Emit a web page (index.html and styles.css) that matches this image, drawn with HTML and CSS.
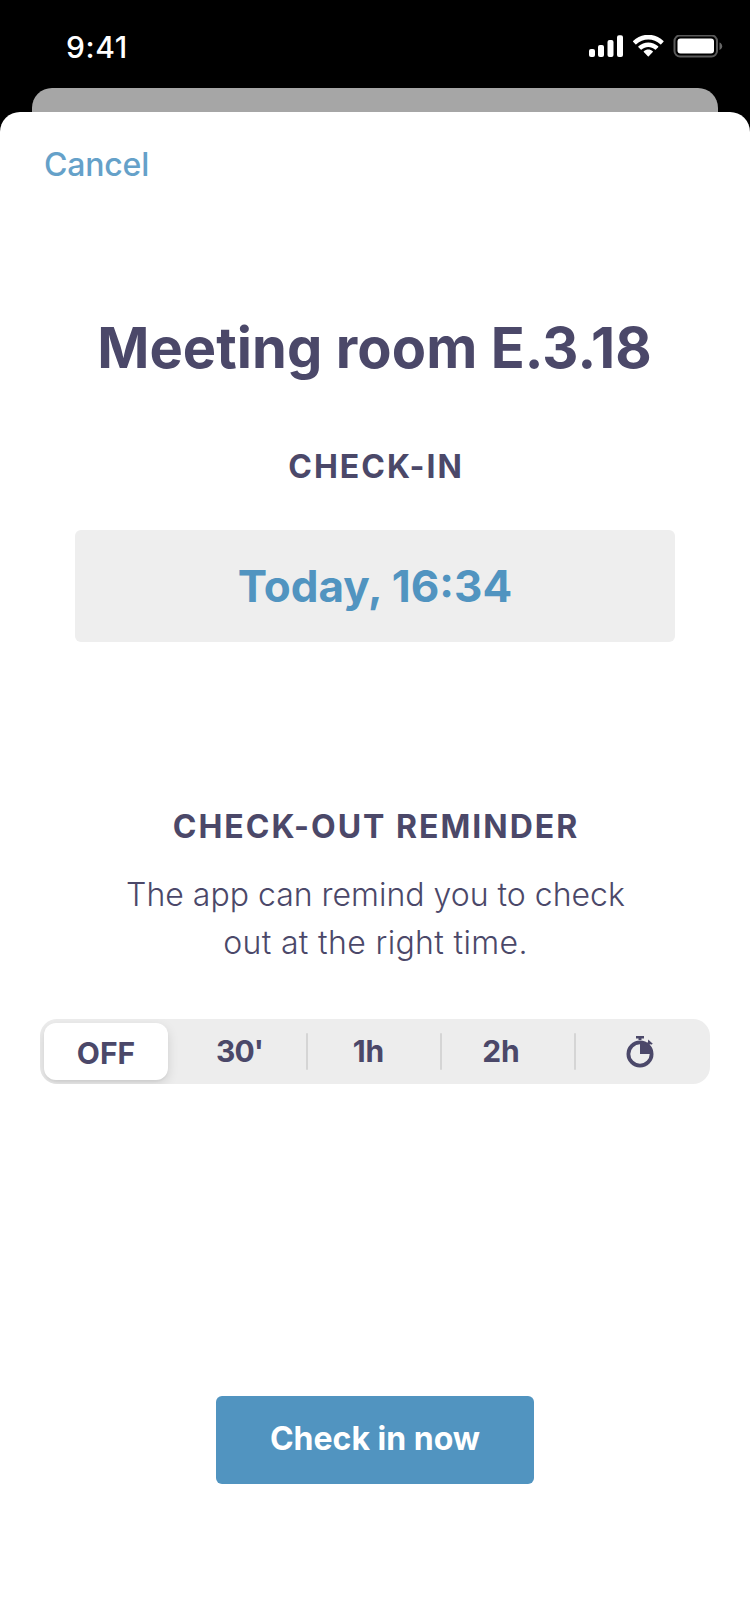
FILE: index.html
```html
<!DOCTYPE html>
<html lang="en">
<head>
<meta charset="utf-8">
<title>Check in</title>
<link rel="stylesheet" href="styles.css">
</head>
<body>
<div class="screen">
  <header class="status">
    <span class="time">9:41</span>
    <svg class="signals" width="136" height="24" viewBox="0 0 136 24">
      <g fill="#fff">
        <rect x="1" y="14" width="6" height="8" rx="2"/>
        <rect x="10" y="10" width="6" height="12" rx="2"/>
        <rect x="19.5" y="5" width="6" height="17" rx="2"/>
        <rect x="29" y="0.3" width="6" height="21.7" rx="2"/>
        <path d="M60.3 4.4c4.5 0 8.800 1.700 12 4.800.25.25.63.25.87 0l2.330-2.400c.25-.25.25-.65 0-.9-8.500-8.200-21.900-8.200-30.400 0-.25.25-.25.650 0 .9l2.330 2.400c.24.25.62.25.870 0 3.200-3.100 7.500-4.800 12-4.800z"/>
        <path d="M60.300 12c2.460 0 4.840.930 6.670 2.600.25.24.64.24.88 0l2.330-2.400c.25-.25.24-.66 0-.91-5.570-5.200-14.190-5.200-19.760 0-.24.25-.25.66 0 .91l2.330 2.400c.24.24.63.24.88 0 1.830-1.670 4.210-2.600 6.670-2.600z"/>
        <path d="M64.800 17.100c.25-.25.24-.66-.02-.89-2.590-2.210-6.370-2.210-8.960 0-.26.23-.27.640-.02.890l4.030 4.100c.25.25.69.25.94 0z"/>
        <rect x="89.500" y="3.500" width="36.500" height="15" rx="3"/>
      </g>
      <rect x="86.500" y="0.500" width="42.500" height="21" rx="5.500" fill="none" stroke="#5a5a5a" stroke-width="2"/>
      <path d="M131.500 7.500c1.600.6 2.700 2 2.700 3.700s-1.100 3.100-2.700 3.700z" fill="#666"/>
    </svg>
  </header>
  <div class="backdrop"></div>
  <main class="sheet">
    <a class="cancel">Cancel</a>
    <h1 class="title">Meeting room E.3.18</h1>
    <h2 class="label">CHECK-IN</h2>
    <div class="when">Today, 16:34</div>
    <h2 class="label label-out">CHECK-OUT REMINDER</h2>
    <p class="hint">The app can remind you to check<br><span class="hint-end">out at the right time.</span></p>
    <div class="segments">
      <div class="seg seg-on">OFF</div>
      <div class="seg seg-30">30'</div>
      <div class="divider"></div>
      <div class="seg seg-1h">1h</div>
      <div class="divider"></div>
      <div class="seg seg-2h">2h</div>
      <div class="divider"></div>
      <div class="seg seg-timer">
        <svg width="28" height="34" viewBox="0 0 28 34">
          <circle cx="14" cy="19" r="11.600" fill="none" stroke="#4b4869" stroke-width="3.800"/>
          <path d="M14 19V7.500A11.500 11.500 0 0 1 25.500 19zM10 1h8v2.500h-2.500V5h-3V3.500H10z" fill="#4b4869"/>
          <path d="M22.200 4.600l4.600 4.100-1.700 1-1 -.6-1.800 1.800-2.200-2 1.900-1.900z" fill="#4b4869"/>
        </svg>
      </div>
    </div>
    <button class="submit">Check in now</button>
  </main>
</div>
</body>
</html>
```
FILE: styles.css
```css
* { box-sizing: border-box; }
body {
  margin: 0;
  background: #000;
  font-family: Inter, "Liberation Sans", sans-serif;
  color: #4b4869;
}
.screen {
  display: flex;
  flex-direction: column;
  width: 750px;
  height: 1624px;
  overflow: hidden;
}
.status {
  display: flex;
  justify-content: space-between;
  height: 88px;
  padding: 35px 26px 0 66px;
}
.time {
  font-size: 30px;
  font-weight: 500;
  line-height: 24px;
  letter-spacing: 0.6px;
  color: #fff;
}
.backdrop {
  height: 24px;
  margin: 0 32px;
  border-radius: 20px 20px 0 0;
  background: #a6a6a6;
}
.sheet {
  flex: 1;
  display: flex;
  flex-direction: column;
  align-items: center;
  padding-top: 33px;
  border-radius: 20px 20px 0 0;
  background: #fff;
}
.cancel {
  align-self: flex-start;
  margin-left: 44px;
  font-size: 32px;
  font-weight: 450;
  line-height: 40px;
  letter-spacing: -0.2px;
  color: #65a1c9;
}
.title {
  margin: 129px 0 65px;
  padding-right: 1px;
  font-size: 56px;
  font-weight: 700;
  line-height: 68px;
  letter-spacing: 0.08px;
}
.label {
  margin: 0;
  padding-left: 2px;
  font-size: 32px;
  font-weight: 700;
  line-height: 40px;
  letter-spacing: 2px;
}
.when {
  width: 600px;
  height: 112px;
  margin-top: 43px;
  border-radius: 6px;
  background: #eee;
  font-size: 44px;
  font-weight: 700;
  line-height: 112px;
  text-align: center;
  color: #5194c0;
}
.label-out { margin-top: 165px; }
.hint {
  margin: 24px 0 52px;
  padding-left: 1px;
  font-size: 32px;
  font-weight: 300;
  line-height: 48px;
  letter-spacing: 0;
  text-align: center;
}
.hint-end { letter-spacing: 0.35px; }
.segments {
  display: flex;
  align-items: center;
  width: 670px;
  height: 65px;
  padding: 4px;
  overflow: hidden;
  border-radius: 17px;
  background: #ededed;
}
.seg {
  flex: 1;
  display: flex;
  align-items: center;
  justify-content: center;
  font-size: 30px;
  font-weight: 700;
  line-height: 57px;
}
.seg-on {
  flex: none;
  width: 124px;
  height: 57px;
  padding-top: 3px;
  border-radius: 12px;
  background: #fff;
  box-shadow: 0 4px 12px rgba(0, 0, 0, 0.12), 0 2px 2px rgba(0, 0, 0, 0.04);
}
.seg-30, .seg-1h, .seg-2h { padding-bottom: 1px; }
.seg-30 { flex: none; width: 138px; padding-left: 5px; letter-spacing: -0.9px; }
.seg-1h, .seg-2h { flex: none; width: 132px; padding-right: 11px; }
.seg-2h { padding-right: 14px; }
.seg-timer { padding-right: 2px; }
.divider {
  width: 2px;
  height: 37px;
  border-radius: 1px;
  background: #d5d5d5;
}
.submit {
  width: 318px;
  height: 88px;
  margin-top: 312px;
  padding: 0 0 2px;
  border: 0;
  border-radius: 6px;
  background: #5194c0;
  font: 700 32px/86px Inter, "Liberation Sans", sans-serif;
  color: #fff;
}
```
